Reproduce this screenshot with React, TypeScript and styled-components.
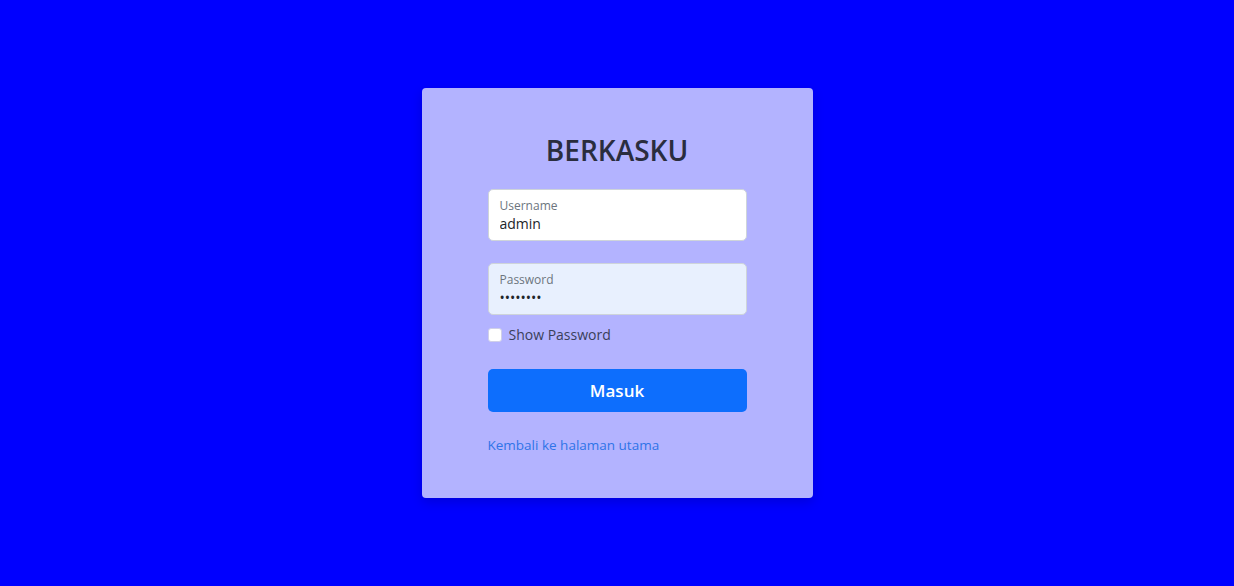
import React, {useState} from 'react'
import styled, {createGlobalStyle} from 'styled-components'

const GlobalStyle = createGlobalStyle`
  html, body {
    margin: 0;
    padding: 0;
    height: 100%;
  }
  body {
    background: #0000ff;
    font-family: "Open Sans", "Noto Sans", sans-serif;
    color: #212529;
  }
  #root {
    height: 100%;
  }
`

const Page = styled.div`
  display: flex;
  justify-content: center;
  align-items: flex-start;
  min-height: 586px;
  padding-top: 88px;
  box-sizing: border-box;
`

const Card = styled.form`
  width: 391px;
  height: 410px;
  box-sizing: border-box;
  background: #b3b3ff;
  border-radius: 4px;
  box-shadow: 0 4px 12px rgba(0, 0, 0, 0.15);
  padding: 44px 66px 0;
  display: flex;
  flex-direction: column;
`

const Title = styled.h1`
  margin: 0 0 21px;
  text-align: center;
  font-size: 28px;
  font-weight: 600;
  line-height: 36px;
  color: #2a2d3e;
`

const Field = styled.label<{$filled?: boolean}>`
  display: flex;
  flex-direction: column;
  height: 52px;
  box-sizing: border-box;
  padding: 8px 11px 0;
  background: ${({$filled}) => ($filled ? '#e8f0fe' : '#ffffff')};
  border: 1px solid #ced4da;
  border-radius: 5px;
  margin-bottom: ${({$filled}) => ($filled ? '10px' : '22px')};
`

const FieldLabel = styled.span`
  font-size: 12px;
  line-height: 16px;
  color: #6c757d;
`

const FieldInput = styled.input`
  border: none;
  outline: none;
  background: transparent;
  padding: 0;
  margin: 0;
  font-family: inherit;
  font-size: 14px;
  line-height: 20px;
  color: #212529;
`

const CheckRow = styled.label`
  display: flex;
  align-items: center;
  gap: 7px;
  font-size: 14px;
  color: #3a3f5a;
  margin-bottom: 25px;
  cursor: pointer;

  input {
    appearance: none;
    width: 14px;
    height: 14px;
    margin: 0;
    background: #fff;
    border: 1px solid #d0d0e8;
    border-radius: 3px;
  }
`

const SubmitButton = styled.button`
  height: 43px;
  width: 100%;
  border: none;
  border-radius: 5px;
  background: #0d6efd;
  color: #fff;
  font-family: inherit;
  font-size: 17px;
  font-weight: 600;
  cursor: pointer;
  margin-bottom: 24px;
`

const BackLink = styled.a`
  font-size: 13.5px;
  color: #2f74e8;
  text-decoration: none;
  line-height: 18px;
`

const App = () => {
  const [show, setShow] = useState(false)

  return (
    <>
      <GlobalStyle />
      <Page>
        <Card onSubmit={(e) => e.preventDefault()}>
          <Title>BERKASKU</Title>
          <Field>
            <FieldLabel>Username</FieldLabel>
            <FieldInput defaultValue="admin" />
          </Field>
          <Field $filled>
            <FieldLabel>Password</FieldLabel>
            <FieldInput type={show ? 'text' : 'password'} defaultValue="password" />
          </Field>
          <CheckRow>
            <input type="checkbox" checked={show} onChange={() => setShow(!show)} />
            Show Password
          </CheckRow>
          <SubmitButton type="submit">Masuk</SubmitButton>
          <BackLink href="#">Kembali ke halaman utama</BackLink>
        </Card>
      </Page>
    </>
  )
}

export default App
